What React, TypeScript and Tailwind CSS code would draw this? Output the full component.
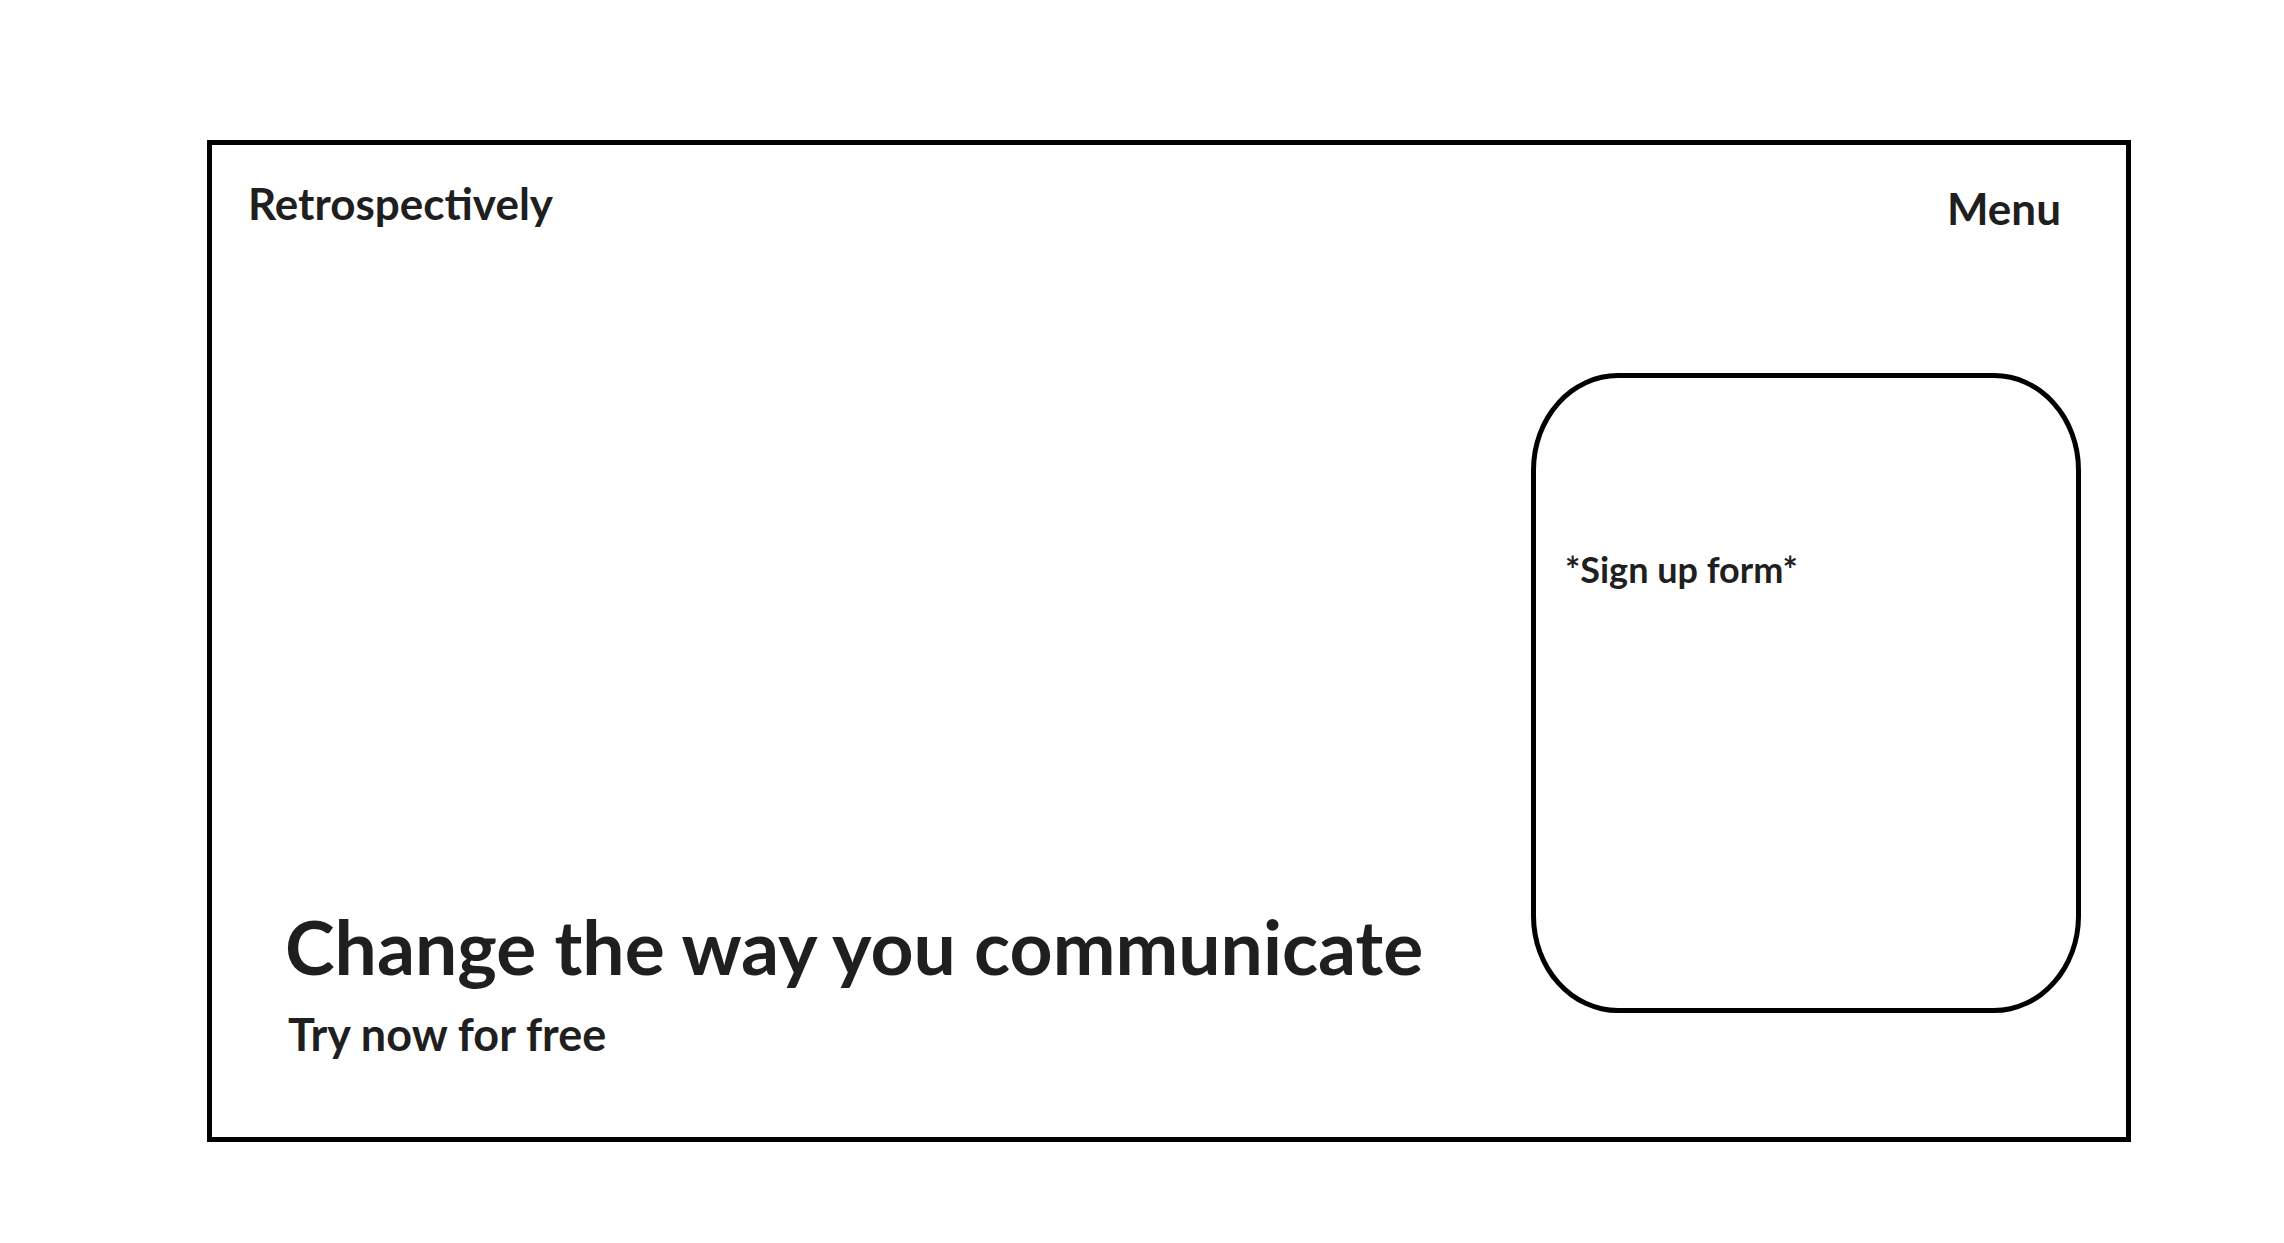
import React from 'react';

const App: React.FC = () => {
  return (
    <div className="min-h-[1243px] w-full bg-white pt-[140px] pl-[207px] font-['Lato',_'Open_Sans',_sans-serif] text-[#1f1f1f]">
      <div className="w-[1924px] h-[1002px] border-[5px] border-black flex flex-col">
        <header className="flex justify-between items-start pt-[36px] pl-[36px] pr-[65px] h-[85px]">
          <div className="text-[44px] font-bold leading-none">Retrospectively</div>
          <div className="mt-[5px] text-[44px] font-bold leading-none">Menu</div>
        </header>

        <main className="flex-1 flex">
          <div className="flex-1 flex flex-col justify-end pl-[73px] pb-[80px]">
            <h1 className="text-[75px] font-bold leading-none">Change the way you communicate</h1>
            <p className="mt-[28px] ml-[3px] text-[45px] font-bold leading-none">Try now for free</p>
          </div>

          <div className="mt-[143px] mb-[124px] mr-[45px] w-[550px] border-[5px] border-black rounded-[87px/97px] pl-[29px] pt-[173px]">
            <p className="text-[36px] font-bold leading-none">*Sign up form*</p>
          </div>
        </main>
      </div>
    </div>
  );
};

export default App;
